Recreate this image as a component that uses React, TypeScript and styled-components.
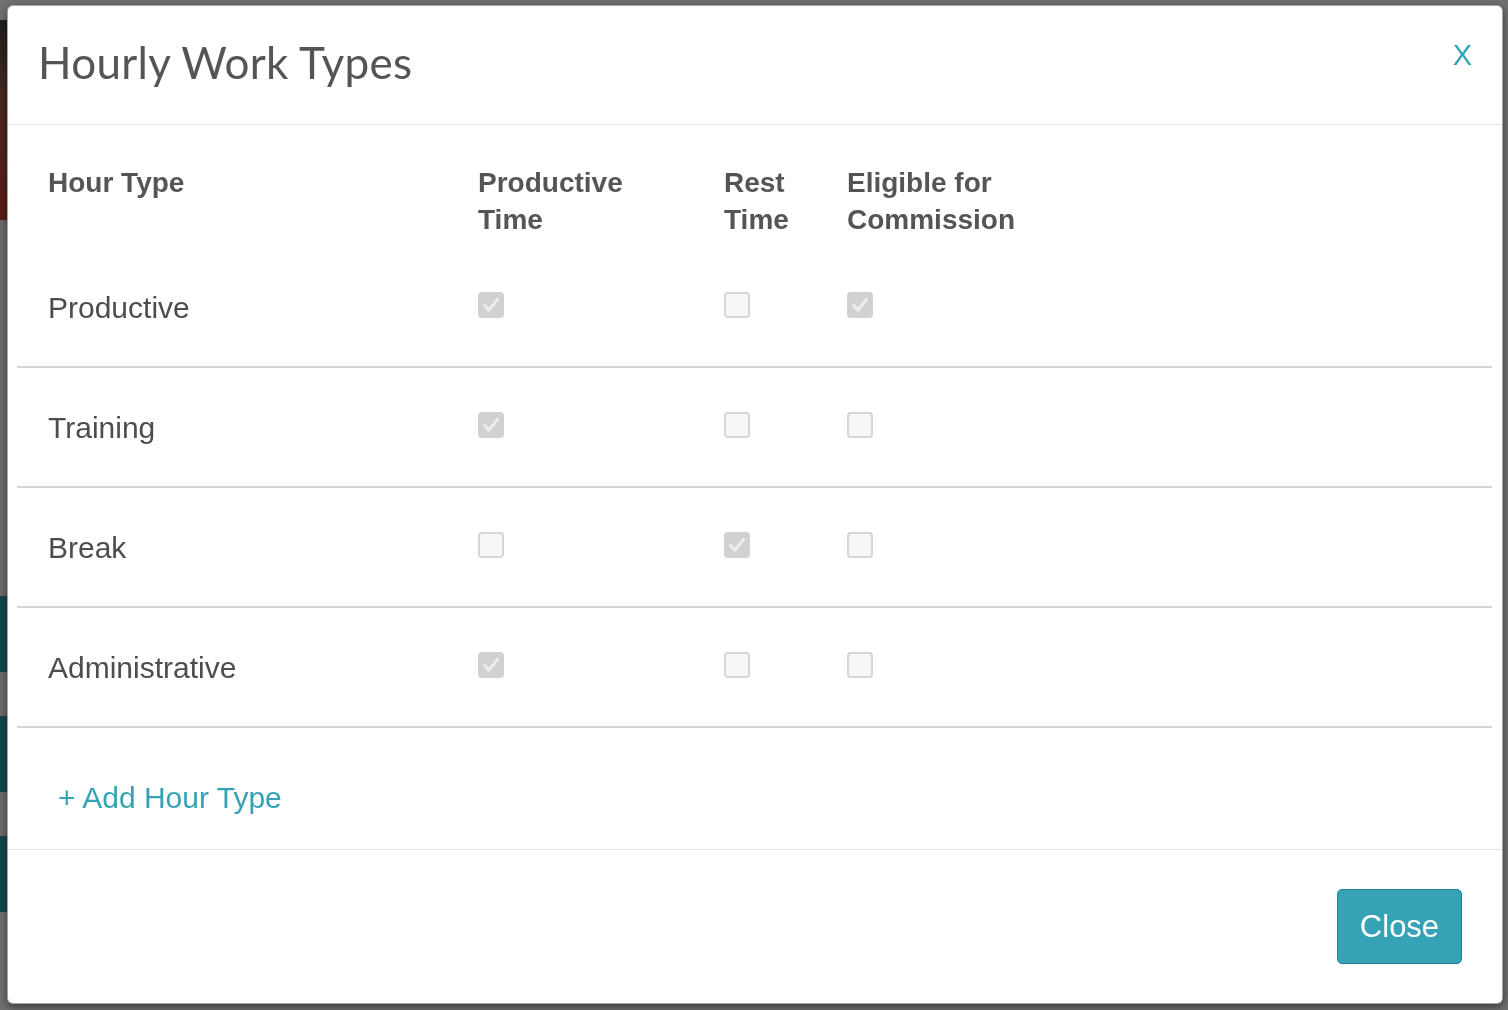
import styled, { createGlobalStyle } from 'styled-components';

const GlobalStyle = createGlobalStyle`
  html, body {
    margin: 0;
    padding: 0;
    height: 100%;
  }
  body {
    background: #707070;
    font-family: 'Liberation Sans', Arial, sans-serif;
    overflow: hidden;
  }
`;

type HourType = {
  name: string;
  productive: boolean;
  rest: boolean;
  commission: boolean;
};

const HOUR_TYPES: HourType[] = [
  { name: 'Productive', productive: true, rest: false, commission: true },
  { name: 'Training', productive: true, rest: false, commission: false },
  { name: 'Break', productive: false, rest: true, commission: false },
  { name: 'Administrative', productive: true, rest: false, commission: false },
];

const CheckMark = () => (
  <svg width="22" height="22" viewBox="0 0 22 22" fill="none">
    <path d="M4.5 11.5 L9 16 L17.5 5.5" stroke="#ededed" strokeWidth="3.2" strokeLinecap="round" strokeLinejoin="round" />
  </svg>
);

const Checkbox = ({ checked }: { checked: boolean }) => (
  <CheckboxBox $checked={checked}>{checked && <CheckMark />}</CheckboxBox>
);

const App = () => {
  return (
    <>
      <GlobalStyle />
      <PageBehind>
        <SideStrip>
          <AvatarBlock />
          <GrayBlock $height={376} />
          <TealBlock $height={76} />
          <GrayBlock $height={44} />
          <TealBlock $height={76} />
          <GrayBlock $height={44} />
          <TealBlock $height={76} />
        </SideStrip>
      </PageBehind>
      <Overlay>
        <Modal>
          <ModalHeader>
            <Title>Hourly Work Types</Title>
            <CloseX>X</CloseX>
          </ModalHeader>
          <ModalBody>
            <HeaderRow>
              <HeadCell>Hour Type</HeadCell>
              <HeadCell>
                Productive
                <br />
                Time
              </HeadCell>
              <HeadCell>
                Rest
                <br />
                Time
              </HeadCell>
              <HeadCell>
                Eligible for
                <br />
                Commission
              </HeadCell>
            </HeaderRow>
            {HOUR_TYPES.map((t) => (
              <DataRow key={t.name}>
                <NameCell>{t.name}</NameCell>
                <BoxCell>
                  <Checkbox checked={t.productive} />
                </BoxCell>
                <BoxCell>
                  <Checkbox checked={t.rest} />
                </BoxCell>
                <BoxCell>
                  <Checkbox checked={t.commission} />
                </BoxCell>
              </DataRow>
            ))}
            <AddRow>
              <AddLink>+ Add Hour Type</AddLink>
            </AddRow>
          </ModalBody>
          <ModalFooter>
            <CloseButton>Close</CloseButton>
          </ModalFooter>
        </Modal>
      </Overlay>
    </>
  );
};

const PageBehind = styled.div`
  display: flex;
  height: 1010px;
`;

const SideStrip = styled.div`
  display: flex;
  flex-direction: column;
  width: 7px;
  padding-top: 20px;
`;

const AvatarBlock = styled.div`
  height: 200px;
  background: linear-gradient(180deg, #1f1f1f 0%, #4a2a20 40%, #5a1a16 100%);
`;

const GrayBlock = styled.div<{ $height: number }>`
  height: ${({ $height }) => $height}px;
  background: #6c6c6c;
`;

const TealBlock = styled.div<{ $height: number }>`
  height: ${({ $height }) => $height}px;
  background: #14474f;
`;

const Overlay = styled.div`
  position: fixed;
  inset: 0;
  padding: 5px 5px 6px 7px;
  box-sizing: border-box;
  display: flex;
`;

const Modal = styled.div`
  flex: 1;
  display: flex;
  flex-direction: column;
  background: #fff;
  border-radius: 6px;
  border: 1px solid rgba(0, 0, 0, 0.35);
  box-shadow: 0 3px 9px rgba(0, 0, 0, 0.5);
  overflow: hidden;
`;

const ModalHeader = styled.div`
  display: flex;
  align-items: flex-start;
  justify-content: space-between;
  height: 118px;
  padding: 0 30px 0 30px;
  border-bottom: 1px solid #e5e5e5;
`;

const Title = styled.h1`
  margin: 32px 0 0 0;
  font-family: Lato, 'Open Sans', sans-serif;
  font-weight: 400;
  font-size: 44px;
  line-height: 1.1;
  color: #555;
  letter-spacing: 0.3px;
`;

const CloseX = styled.button`
  margin-top: 35px;
  padding: 0;
  border: none;
  background: none;
  font-family: 'Liberation Sans', Arial, sans-serif;
  font-size: 29px;
  line-height: 1;
  color: #35a2b5;
  cursor: pointer;
`;

const ModalBody = styled.div`
  display: flex;
  flex-direction: column;
  padding: 11px 10px 0 9px;
`;

const rowColumns = `
  display: grid;
  grid-template-columns: 430px 246px 123px 1fr;
`;

const HeaderRow = styled.div`
  ${rowColumns}
  height: 112px;
  box-sizing: border-box;
  padding-top: 28px;
`;

const HeadCell = styled.div`
  padding-left: 31px;
  font-size: 28px;
  font-weight: 700;
  line-height: 37px;
  color: #555;
`;

const DataRow = styled.div`
  ${rowColumns}
  height: 120px;
  box-sizing: border-box;
  align-items: center;
  border-bottom: 2px solid #d4d4d4;
`;

const NameCell = styled.div`
  padding-left: 31px;
  font-size: 30px;
  color: #4d4d4d;
  padding-top: 2px;
`;

const BoxCell = styled.div`
  padding-left: 31px;
  display: flex;
  align-items: center;
`;

const CheckboxBox = styled.div<{ $checked: boolean }>`
  width: 26px;
  height: 26px;
  box-sizing: border-box;
  border-radius: 4px;
  display: flex;
  align-items: center;
  justify-content: center;
  background: ${({ $checked }) => ($checked ? '#d1d1d1' : '#f7f7f7')};
  border: 2px solid ${({ $checked }) => ($checked ? '#d1d1d1' : '#d6d6d6')};
  margin-top: -4px;
`;

const AddRow = styled.div`
  display: flex;
  align-items: center;
  height: 121px;
  box-sizing: border-box;
  padding: 18px 0 0 41px;
`;

const AddLink = styled.a`
  font-size: 30px;
  color: #35a2b5;
  text-decoration: none;
  cursor: pointer;
`;

const ModalFooter = styled.div`
  display: flex;
  justify-content: flex-end;
  align-items: flex-start;
  flex: 1;
  padding: 39px 40px 0 0;
  border-top: 1px solid #e5e5e5;
`;

const CloseButton = styled.button`
  width: 125px;
  height: 75px;
  border-radius: 5px;
  border: 1px solid #1f8394;
  background: #35a2b5;
  color: #fff;
  font-family: 'Liberation Sans', Arial, sans-serif;
  font-size: 31px;
  cursor: pointer;
`;

export default App;
